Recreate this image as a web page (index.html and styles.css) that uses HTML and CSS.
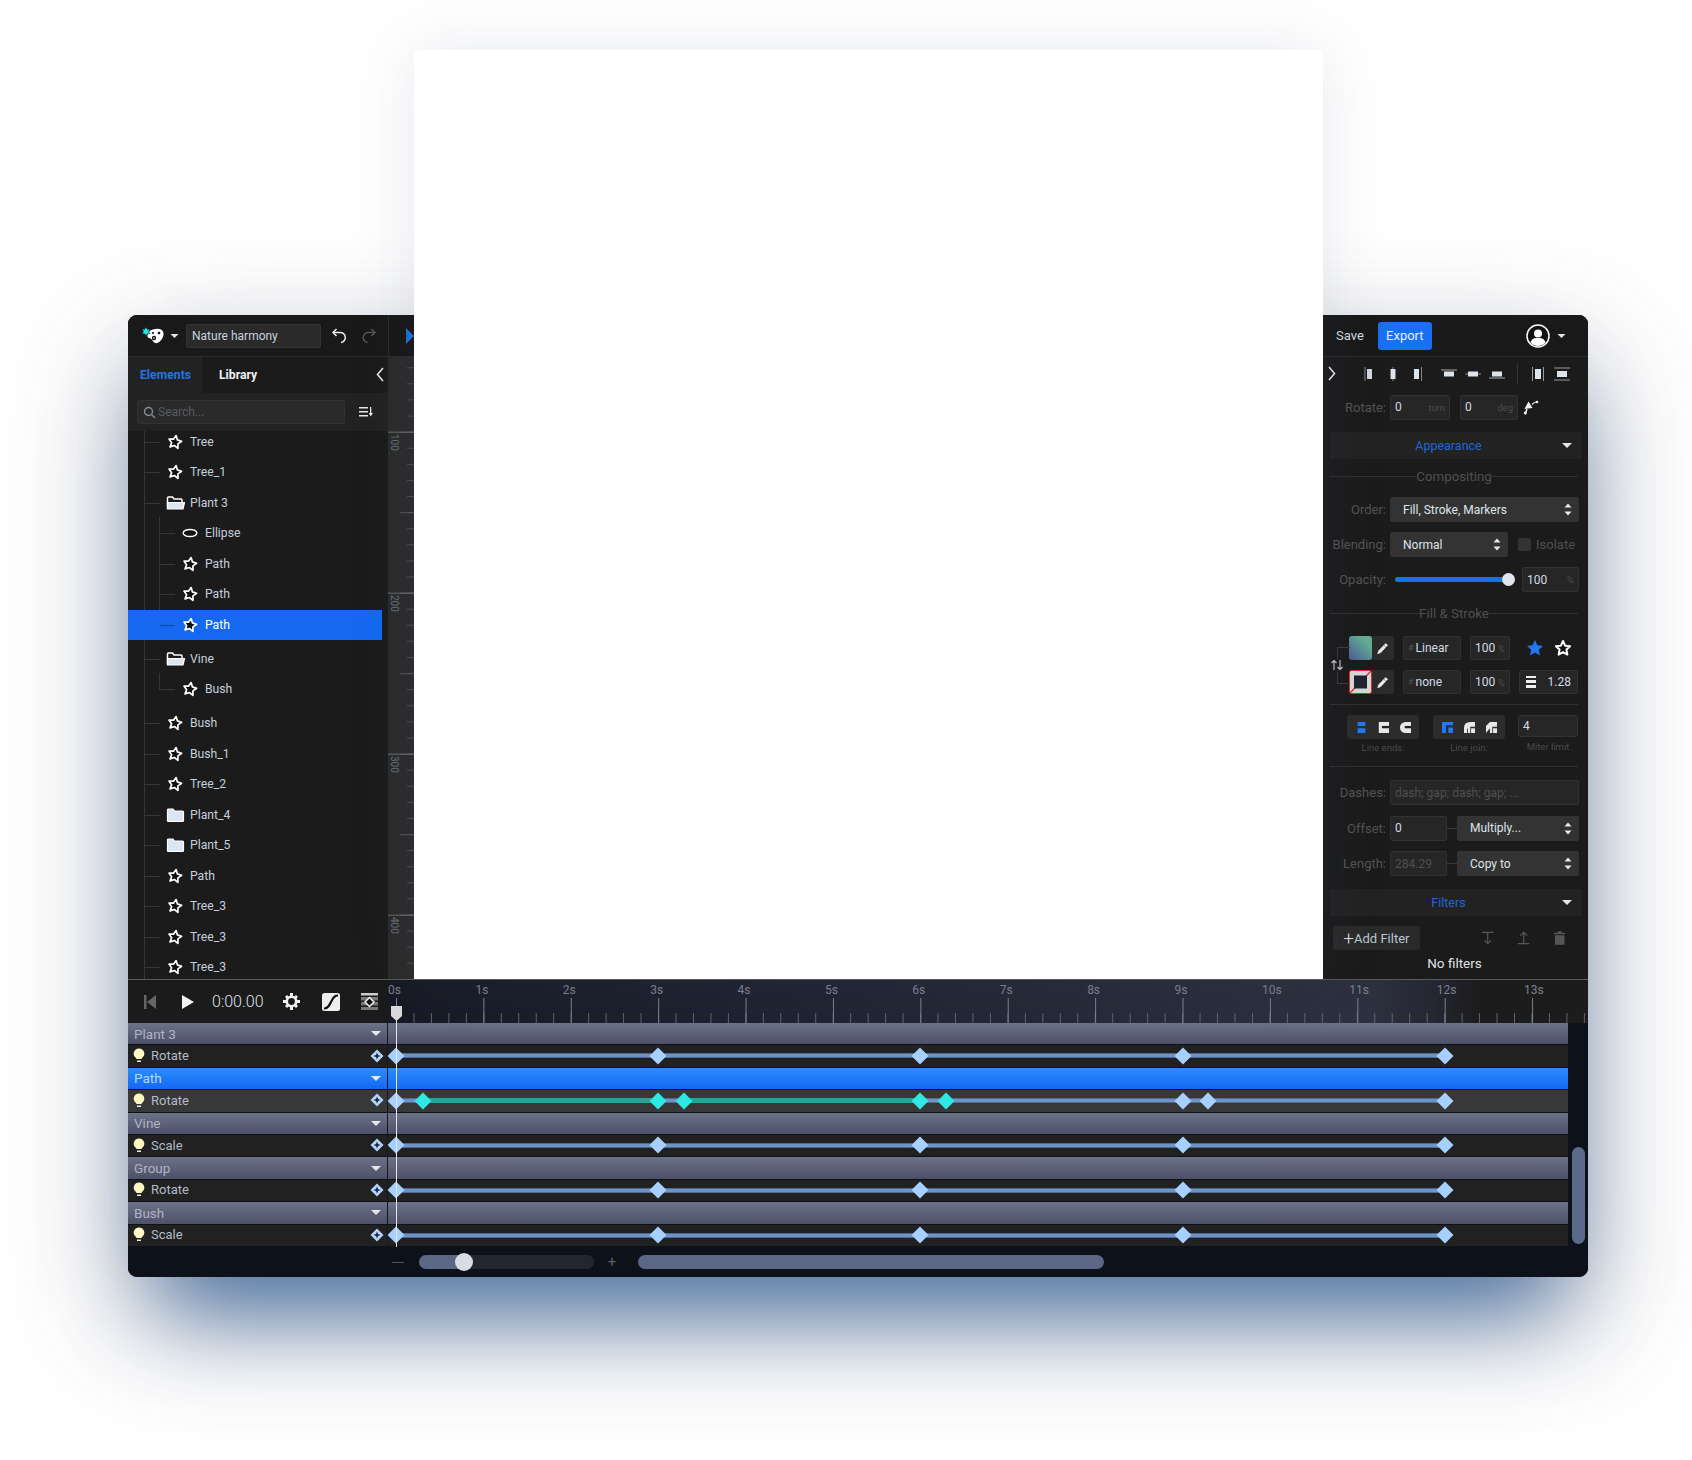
FILE: index.html
```html
<!DOCTYPE html>
<html lang="en">
<head>
    <meta charset="UTF-8">
    <meta name="viewport" content="width=device-width, initial-scale=1.0">
    <title>Nature harmony - Editor</title>
    <link rel="stylesheet" href="styles.css">
</head>
<body>
    <svg class="defs" width="0" height="0">
        <symbol id="star" viewBox="0 0 16 16"><path transform="rotate(10 8 8)" d="M8 1.500l2 4 4.400.7-3.200 3.100.8 4.400L8 11.600l-4 2.100.8-4.400L1.600 6.200 6 5.500z" fill="#111" stroke="#fff" stroke-width="1.700" stroke-linejoin="round"/></symbol>
        <symbol id="folder-open" viewBox="0 0 20 16"><path d="M1.500 13.500V3q0-1 1-1h4l1.500 2h7q1 0 1 1v2" fill="none" stroke="#fff" stroke-width="1.500"/><path d="M1.500 14l0-6.500h17l-1.500 6.500z" fill="#dce6f2" stroke="#fff" stroke-width="1.200" stroke-linejoin="round"/></symbol>
        <symbol id="folder" viewBox="0 0 20 16"><path d="M1.500 13.500V3q0-1 1-1h4.500l1.500 2h8q1 0 1 1v8.500q0 1-1 1H2.500q-1 0-1-1z" fill="#dce6f2" stroke="#fff" stroke-width="1.200"/></symbol>
        <symbol id="updown" viewBox="0 0 8 13"><path d="M4 .5l3.500 4h-7zM4 12.500l3.500-4h-7z" fill="#e8e8e8"/></symbol>
        <symbol id="caret" viewBox="0 0 10 5"><path d="M0 0h10L5 5z" fill="#e6e6e6"/></symbol>
        <symbol id="pencil" viewBox="0 0 14 14"><path d="M10.500 1.500l2 2-7.500 8-3.200 1.200 1-3.300z" fill="#eee" stroke="#eee" stroke-width=".6" stroke-linejoin="round"/><path d="M9 4l1.500 1.500" stroke="#333" stroke-width=".8"/></symbol>
        <symbol id="bulb" viewBox="0 0 12 15"><path d="M6 .5a5.300 5.300 0 0 1 2.800 9.800L8.500 11h-5l-.3-.7A5.300 5.300 0 0 1 6 .5z" fill="#fff8c4"/><path d="M4 12.500h4V14H4z" fill="#eee"/></symbol>
        <symbol id="key-btn" viewBox="0 0 14 14"><path d="M7 .5L13.500 7 7 13.500.5 7z" fill="#b2d5ff"/><path d="M7 3.500L8 6l2.500 1L8 8l-1 2.500L6 8 3.500 7 6 6z" fill="#1f2430"/></symbol>
    </svg>

    <div class="canvas"></div>

    <div class="window">
        <div class="workspace">
            <!-- elements panel -->
            <aside class="left-panel">
                <div class="top-bar">
                    <svg class="logo" width="24" height="18" viewBox="0 0 24 18">
                        <path d="M9 3.500q5-2.500 10-1.500 4 1.500 3.500 6-1 5-5 7.500-3 1.500-5-.5-1-3-4-4-2.500-.5-2-3z" fill="#fff"/>
                        <circle cx="13" cy="11" r="2.200" fill="#111"/><circle cx="13" cy="11" r=".8" fill="#fff"/><circle cx="18" cy="6" r="1.300" fill="#111"/><circle cx="12" cy="6" r="1.100" fill="#111"/>
                        <path d="M5 0l1.300 2.200L9 2.200 7.600 4.500 9 6.800H6.300L5 9 3.700 6.800H1L2.400 4.500 1 2.200h2.700z" fill="#21e6e6" stroke="#111" stroke-width=".5"/>
                    </svg>
                    <svg class="caret" width="9" height="4"><use href="#caret"/></svg>
                    <div class="project-name">Nature harmony</div>
                    <svg class="history" width="18" height="18" viewBox="0 0 18 18" fill="none" stroke="#eee" stroke-width="1.500"><path d="M3 5.500h6.500a5 5 0 0 1 1.500 10"/><path d="M6.500 2L3 5.500 6.500 9" stroke-width="1.500"/></svg>
                    <svg class="history dim" width="18" height="18" viewBox="0 0 18 18" fill="none" stroke="#555" stroke-width="1.500"><path d="M15 5.500H9a5 5 0 0 0-1.500 10"/><path d="M11.500 2L15 5.500 11.500 9"/></svg>
                </div>
                <div class="tabs">
                    <div class="tab active">Elements</div>
                    <div class="tab library">Library</div>
                    <svg class="collapse" width="8" height="15" viewBox="0 0 8 15" fill="none" stroke="#e8e8e8" stroke-width="1.600"><path d="M7 1L1.500 7.500 7 14"/></svg>
                </div>
                <div class="search-row">
                    <div class="search">
                        <svg width="13" height="13" viewBox="0 0 13 13" fill="none" stroke="#8a8f98" stroke-width="1.300"><circle cx="5.500" cy="5.500" r="4"/><path d="M8.500 8.500l3.500 3.500"/></svg>
                        <span>Search...</span>
                    </div>
                    <svg width="14" height="10" viewBox="0 0 14 10" fill="#e8e8e8"><path d="M0 0h9v1.500H0zM0 4h9v1.500H0zM0 8h9v1.500H0zM11 0h1.300v6H14l-2.300 3.500L9.700 6H11z"/></svg>
                </div>
                <div class="tree">
                    <div class="tree-scroll">
                        <div class="node"><svg class="icon"><use href="#star"/></svg>Tree</div>
                        <div class="node"><svg class="icon"><use href="#star"/></svg>Tree_1</div>
                        <div class="node"><svg class="icon wide"><use href="#folder-open"/></svg>Plant 3</div>
                        <div class="branch">
                            <div class="node sub"><svg class="ellipse" width="16" height="10" viewBox="0 0 16 10"><ellipse cx="8" cy="5" rx="6.800" ry="3.600" fill="#111" stroke="#fff" stroke-width="1.500"/></svg>Ellipse</div>
                            <div class="node sub"><svg class="icon"><use href="#star"/></svg>Path</div>
                            <div class="node sub"><svg class="icon"><use href="#star"/></svg>Path</div>
                            <div class="node sub selected"><svg class="icon"><use href="#star"/></svg>Path</div>
                        </div>
                        <div class="node group-start"><svg class="icon wide"><use href="#folder-open"/></svg>Vine</div>
                        <div class="branch short">
                            <div class="node sub"><svg class="icon"><use href="#star"/></svg>Bush</div>
                        </div>
                        <div class="node group-start"><svg class="icon"><use href="#star"/></svg>Bush</div>
                        <div class="node"><svg class="icon"><use href="#star"/></svg>Bush_1</div>
                        <div class="node"><svg class="icon"><use href="#star"/></svg>Tree_2</div>
                        <div class="node"><svg class="icon wide"><use href="#folder"/></svg>Plant_4</div>
                        <div class="node"><svg class="icon wide"><use href="#folder"/></svg>Plant_5</div>
                        <div class="node"><svg class="icon"><use href="#star"/></svg>Path</div>
                        <div class="node"><svg class="icon"><use href="#star"/></svg>Tree_3</div>
                        <div class="node"><svg class="icon"><use href="#star"/></svg>Tree_3</div>
                        <div class="node"><svg class="icon"><use href="#star"/></svg>Tree_3</div>
                    </div>
                </div>
            </aside>

            <div class="v-ruler-col">
                <div class="v-ruler-head"><svg width="8" height="16" viewBox="0 0 8 16"><path d="M0 0l8 8-8 8z" fill="#1f6fd8"/></svg></div>
                <div class="v-ruler">
                    <span class="r100">100</span>
                    <span class="r200">200</span>
                    <span class="r300">300</span>
                    <span class="r400">400</span>
                </div>
            </div>

            <div class="center"></div>

            <!-- properties panel -->
            <aside class="right-panel">
                <div class="top-bar right-bar">
                    <span class="save">Save</span>
                    <span class="export">Export</span>
                    <svg class="avatar" width="24" height="24" viewBox="0 0 24 24"><circle cx="12" cy="12" r="11" fill="#111" stroke="#fff" stroke-width="1.500"/><circle cx="12" cy="9.500" r="4" fill="#fff"/><path d="M4.500 18.500q1-4 5-4.500h5q4 .5 5 4.500a10 10 0 0 1-15 0z" fill="#fff"/></svg>
                    <svg class="caret" width="9" height="4"><use href="#caret"/></svg>
                </div>

                <div class="align-row">
                    <svg class="expand" width="8" height="15" viewBox="0 0 8 15" fill="none" stroke="#e0e0e0" stroke-width="1.600"><path d="M1 1l5.500 6.500L1 14"/></svg>
                    <svg class="align" width="16" height="16" viewBox="0 0 16 16"><path d="M3.500 1h1v14h-1z" fill="#888"/><path d="M6 3h5v10H6z" fill="#cfd6e0"/></svg>
                    <svg class="align" width="16" height="16" viewBox="0 0 16 16"><path d="M7.500 1h1v14h-1z" fill="#888"/><path d="M5.500 3h5v10h-5z" fill="#dde3ea"/></svg>
                    <svg class="align" width="16" height="16" viewBox="0 0 16 16"><path d="M12 1h1v14h-1z" fill="#888"/><path d="M5 3h5v10H5z" fill="#dde3ea"/></svg>
                    <svg class="align gap-l" width="16" height="16" viewBox="0 0 16 16"><path d="M0 3.500h16v1H0z" fill="#aaa"/><path d="M3 5.500h10v5H3z" fill="#dde3ea"/></svg>
                    <svg class="align" width="16" height="16" viewBox="0 0 16 16"><path d="M0 7.500h16v1H0z" fill="#888"/><path d="M3 5.500h10v5H3z" fill="#dde3ea"/></svg>
                    <svg class="align" width="16" height="16" viewBox="0 0 16 16"><path d="M0 11.500h16v1H0z" fill="#aaa"/><path d="M3 5.500h10v5H3z" fill="#dde3ea"/></svg>
                    <span class="align-sep"></span>
                    <svg class="align" width="16" height="16" viewBox="0 0 16 16"><path d="M2 1h1v14H2zM13 1h1v14h-1z" fill="#999"/><path d="M5 3h6v10H5z" fill="#dde3ea"/></svg>
                    <svg class="align" width="16" height="16" viewBox="0 0 16 16"><path d="M0 1.500h16v1H0zM0 13.500h16v1H0z" fill="#999"/><path d="M3 5h10v6H3z" fill="#dde3ea"/></svg>
                </div>

                <div class="form-row rotate-row">
                    <label>Rotate:</label>
                    <div class="field w60"><span>0</span><em>turn</em></div>
                    <div class="field w58"><span>0</span><em>deg</em></div>
                    <svg class="origin" width="16" height="15" viewBox="0 0 16 15" fill="none"><path d="M5.500 1.500L9.500 8 1.500 9z" fill="#f2f2f2"/><path d="M4 9l-1.500 4" stroke="#f2f2f2" stroke-width="1.500"/><path d="M9 4.500q2-2 4-2.500" stroke="#eee" stroke-width="1.200"/><circle cx="2.300" cy="13" r="1.500" fill="#f2f2f2"/><circle cx="14" cy="2" r="1.300" fill="#f2f2f2"/></svg>
                </div>

                <div class="section-bar">Appearance<svg class="caret" width="10" height="5"><use href="#caret"/></svg></div>
                <div class="legend comp">Compositing</div>

                <div class="form-row order-row">
                    <label>Order:</label>
                    <div class="select grow">Fill, Stroke, Markers<svg width="8" height="13"><use href="#updown"/></svg></div>
                </div>
                <div class="form-row blend-row">
                    <label>Blending:</label>
                    <div class="select w118">Normal<svg width="8" height="13"><use href="#updown"/></svg></div>
                    <span class="check"></span>
                    <span class="isolate">Isolate</span>
                </div>
                <div class="form-row opacity-row">
                    <label>Opacity:</label>
                    <div class="slider"><span></span></div>
                    <div class="field w57"><span>100</span><em>%</em></div>
                </div>

                <div class="legend fs">Fill &amp; Stroke</div>

                <div class="paint">
                    <svg class="swap" width="14" height="12" viewBox="0 0 14 12" fill="none" stroke="#ccc" stroke-width="1.100"><path d="M4 11V1.500M1.500 4L4 1.500 6.500 4M10 1v9.500M7.500 8l2.500 2.500L12.500 8"/></svg>
                    <div class="paint-row">
                        <div class="swatch-box"><span class="swatch fill"></span><svg width="13" height="13"><use href="#pencil"/></svg></div>
                        <div class="field w58 tag"><i>#</i><span>Linear</span></div>
                        <div class="field w40 tag"><span>100</span><em>%</em></div>
                        <svg class="star-btn first" width="18" height="18" viewBox="0 0 18 18"><path d="M9 1l2.400 5.300 5.600.6-4.200 3.800 1.200 5.800L9 13.600l-5 2.900 1.200-5.800L1 6.900l5.600-.6z" fill="#2178f2"/></svg>
                        <svg class="star-btn" width="18" height="18" viewBox="0 0 18 18"><path d="M9 2l2.100 4.700 5 .5-3.700 3.400 1 5L9 13.100l-4.400 2.500 1-5L1.900 7.200l5-.5z" fill="#111" stroke="#fff" stroke-width="2" stroke-linejoin="round"/></svg>
                    </div>
                    <div class="paint-row">
                        <div class="swatch-box">
                            <svg class="swatch" width="23" height="24" viewBox="0 0 23 24">
                                <rect x=".5" y=".5" width="22" height="23" rx="2" fill="#d9d9d9" stroke="#e02c2c"/>
                                <path d="M1 23L22 1" stroke="#e02c2c" stroke-width="1.300"/>
                                <rect x="5" y="5.500" width="13" height="13" fill="#20242e"/>
                            </svg>
                            <svg width="13" height="13"><use href="#pencil"/></svg>
                        </div>
                        <div class="field w58 tag"><i>#</i><span>none</span></div>
                        <div class="field w40 tag"><span>100</span><em>%</em></div>
                        <div class="field w59 width-box">
                            <svg width="12" height="12" viewBox="0 0 12 12" fill="#eee"><path d="M1 0h10v2H1zM1 4h10v3H1zM1 9h10v3H1z"/></svg>
                            <span>1.28</span>
                        </div>
                    </div>
                </div>

                <div class="rule r1"></div>

                <div class="line-opts">
                    <div class="opt">
                        <div class="btns">
                            <svg width="13" height="11" viewBox="0 0 16 14" fill="#2178f2"><path d="M3 0h10v5H3zM3 8h10v6H3z"/></svg>
                            <svg width="13" height="11" viewBox="0 0 16 14"><path d="M2 0h13v14H2z" fill="#e8e8e8"/><path d="M6 5h9v3H6z" fill="#222"/></svg>
                            <svg width="13" height="11" viewBox="0 0 16 14"><path d="M15 0H8a7 7 0 0 0 0 14h7z" fill="#e8e8e8"/><path d="M7 5h8v3H7z" fill="#222"/></svg>
                        </div>
                        <small>Line ends:</small>
                    </div>
                    <div class="opt">
                        <div class="btns">
                            <svg width="13" height="11" viewBox="0 0 16 14"><path d="M1 0h14v4H6v10H1z" fill="#2178f2"/><path d="M9 7h6v7H9z" fill="#2178f2"/></svg>
                            <svg width="13" height="11" viewBox="0 0 16 14"><path d="M1 14V8q0-8 8-8h6v6H9v8H6V8q-1 0-1 2v4z" fill="#e8e8e8"/><path d="M10 8h5v6h-5z" fill="#e8e8e8"/></svg>
                            <svg width="13" height="11" viewBox="0 0 16 14"><path d="M1 14V5l5-5h9v6H9v8H6V8z" fill="#e8e8e8"/><path d="M10 8h5v6h-5z" fill="#e8e8e8"/></svg>
                        </div>
                        <small>Line join:</small>
                    </div>
                    <div class="opt miter">
                        <div class="field w60"><span>4</span></div>
                        <small>Miter limit</small>
                    </div>
                </div>

                <div class="rule r2"></div>

                <div class="form-row dash-row">
                    <label>Dashes:</label>
                    <div class="field grow placeholder"><span>dash; gap; dash; gap; ...</span></div>
                </div>
                <div class="form-row dash-row2">
                    <label>Offset:</label>
                    <div class="field w57"><span>0</span></div>
                    <span class="link"></span>
                    <div class="select grow">Multiply...<svg width="8" height="13"><use href="#updown"/></svg></div>
                </div>
                <div class="form-row dash-row2">
                    <label>Length:</label>
                    <div class="field w57 placeholder"><span>284.29</span></div>
                    <span class="link"></span>
                    <div class="select grow">Copy to<svg width="8" height="13"><use href="#updown"/></svg></div>
                </div>

                <div class="section-bar filters">Filters<svg class="caret" width="10" height="5"><use href="#caret"/></svg></div>

                <div class="filter-actions">
                    <div class="add-filter"><b>+</b>Add Filter</div>
                    <svg width="14" height="14" viewBox="0 0 14 14" fill="none" stroke="#555" stroke-width="1.300"><path d="M1 1h12M7 1v12M3.500 9.500L7 13l3.500-3.500"/></svg>
                    <svg width="14" height="14" viewBox="0 0 14 14" fill="none" stroke="#555" stroke-width="1.300"><path d="M1 13h12M7 13V1M3.500 4.500L7 1l3.500 3.500"/></svg>
                    <svg width="12" height="14" viewBox="0 0 12 14" fill="#555"><path d="M4 0h4v1.500h4V3H0V1.500h4zM1 4h10v10H1z"/></svg>
                </div>
                <div class="no-filters">No filters</div>
            </aside>
        </div>

        <!-- timeline -->
        <section class="timeline">
            <div class="time-head">
                <div class="transport">
                    <svg class="skip" width="14" height="16" viewBox="0 0 14 16" fill="#666"><path d="M1 1h2.500v14H1zM13 1v14L4 8z"/></svg>
                    <svg class="play" width="14" height="16" viewBox="0 0 14 16" fill="#f2f2f2"><path d="M1 1l12 7-12 7z"/></svg>
                    <span class="clock">0:00.00</span>
                    <svg class="gear" width="17" height="17" viewBox="0 0 17 17"><circle cx="8.500" cy="8.500" r="4.700" fill="none" stroke="#f2f2f2" stroke-width="2.600"/><path d="M7 0h3v3H7zM7 14h3v3H7zM0 7h3v3H0zM14 7h3v3h-3zM2 4l2-2 2 2-2 2zM11 4l2-2 2 2-2 2zM2 13l2-2 2 2-2 2zM11 13l2-2 2 2-2 2z" fill="#f2f2f2"/></svg>
                    <svg class="curve" width="18" height="18" viewBox="0 0 18 18"><rect width="18" height="18" rx="2.500" fill="#eee"/><path d="M2 15.500C9.500 16 8.500 2 16 2.500" fill="none" stroke="#111" stroke-width="2.200"/></svg>
                    <svg class="keys" width="17" height="17" viewBox="0 0 17 17"><path d="M0 0h17v2.500H0z" fill="#ccc"/><path d="M0 4h17v3.500H0zM0 9h17v3.500H0zM0 14h17v3H0z" fill="#777"/><path d="M8.500 4.500l4.500 4.500-4.500 4.500L4 9z" fill="#111" stroke="#eee" stroke-width="1.500"/></svg>
                </div>
                <div class="time-ruler">
                    <div class="sec-labels">
                        <span>0s</span><span>1s</span><span>2s</span><span>3s</span><span>4s</span><span>5s</span><span>6s</span><span>7s</span><span>8s</span><span>9s</span><span>10s</span><span>11s</span><span>12s</span><span>13s</span>
                    </div>
                </div>
            </div>

            <div class="time-body">
                <div class="tracks">
                    <div class="track group"><div class="track-label">Plant 3<svg width="10" height="5"><use href="#caret"/></svg></div><div class="lane"></div></div>
                    <div class="track prop">
                        <div class="track-label"><svg class="bulb" width="12" height="15"><use href="#bulb"/></svg>Rotate<svg class="key-btn" width="14" height="14"><use href="#key-btn"/></svg></div>
                        <div class="lane"><span class="bar"></span><i class="kf k0"></i><i class="kf k3"></i><i class="kf k6"></i><i class="kf k9"></i><i class="kf k12"></i></div>
                    </div>
                    <div class="track group current"><div class="track-label">Path<svg width="10" height="5"><use href="#caret"/></svg></div><div class="lane"></div></div>
                    <div class="track prop lit">
                        <div class="track-label"><svg class="bulb" width="12" height="15"><use href="#bulb"/></svg>Rotate<svg class="key-btn" width="14" height="14"><use href="#key-btn"/></svg></div>
                        <div class="lane">
                            <span class="bar"></span><span class="bar-on s1"></span><span class="bar-on s2"></span>
                            <i class="kf k0"></i><i class="kf on k-a"></i><i class="kf on k3"></i><i class="kf on k-b"></i><i class="kf on k6"></i><i class="kf on k-c"></i><i class="kf k9"></i><i class="kf k-d"></i><i class="kf k12"></i>
                        </div>
                    </div>
                    <div class="track group"><div class="track-label">Vine<svg width="10" height="5"><use href="#caret"/></svg></div><div class="lane"></div></div>
                    <div class="track prop">
                        <div class="track-label"><svg class="bulb" width="12" height="15"><use href="#bulb"/></svg>Scale<svg class="key-btn" width="14" height="14"><use href="#key-btn"/></svg></div>
                        <div class="lane"><span class="bar"></span><i class="kf k0"></i><i class="kf k3"></i><i class="kf k6"></i><i class="kf k9"></i><i class="kf k12"></i></div>
                    </div>
                    <div class="track group"><div class="track-label">Group<svg width="10" height="5"><use href="#caret"/></svg></div><div class="lane"></div></div>
                    <div class="track prop">
                        <div class="track-label"><svg class="bulb" width="12" height="15"><use href="#bulb"/></svg>Rotate<svg class="key-btn" width="14" height="14"><use href="#key-btn"/></svg></div>
                        <div class="lane"><span class="bar"></span><i class="kf k0"></i><i class="kf k3"></i><i class="kf k6"></i><i class="kf k9"></i><i class="kf k12"></i></div>
                    </div>
                    <div class="track group"><div class="track-label">Bush<svg width="10" height="5"><use href="#caret"/></svg></div><div class="lane"></div></div>
                    <div class="track prop">
                        <div class="track-label"><svg class="bulb" width="12" height="15"><use href="#bulb"/></svg>Scale<svg class="key-btn" width="14" height="14"><use href="#key-btn"/></svg></div>
                        <div class="lane"><span class="bar"></span><i class="kf k0"></i><i class="kf k3"></i><i class="kf k6"></i><i class="kf k9"></i><i class="kf k12"></i></div>
                    </div>
                </div>
                <div class="v-scroll"><span></span></div>
            </div>

            <div class="time-foot">
                <span class="zoom-btn minus"></span>
                <div class="zoom-track"><span class="zoom-fill"></span><span class="zoom-thumb"></span></div>
                <span class="zoom-btn plus">+</span>
                <div class="h-scroll"></div>
            </div>

            <div class="playhead"><svg width="11" height="15" viewBox="0 0 11 15"><path d="M0 0h11v10l-5.500 5L0 10z" fill="#d9d9d9"/></svg></div>
        </section>
    </div>
</body>
</html>
```

FILE: styles.css
```css
* {
    margin: 0;
    padding: 0;
    box-sizing: border-box;
}

body {
    font-family: Roboto, "Liberation Sans", sans-serif;
    font-size: 12px;
    color: #c8d0dc;
    background: #fff;
    height: 1460px;
    overflow: hidden;
    padding: 315px 104px 0 128px;
    position: relative;
}

.defs {
    position: absolute;
}

.canvas {
    position: absolute;
    left: 414px;
    top: 50px;
    width: 909px;
    height: 929px;
    background: #fff;
    box-shadow: 0 0 60px rgba(70, 85, 115, 0.13);
    z-index: 2;
}

.window {
    width: 1460px;
    height: 962px;
    background: #1a1a1a;
    border-radius: 9px;
    box-shadow: 0 62px 85px -36px rgba(30, 85, 150, 0.72), 0 42px 115px rgba(60, 70, 95, 0.44);
    display: flex;
    flex-direction: column;
    position: relative;
    overflow: hidden;
}

.workspace {
    height: 664px;
    display: flex;
}

/* left panel */
.left-panel {
    width: 260px;
    display: flex;
    flex-direction: column;
    background: #1b1b1b;
}

.top-bar {
    height: 42px;
    display: flex;
    align-items: center;
    border-bottom: 1px solid #2a2a2a;
    background: #191919;
    padding-left: 13px;
}

.caret {
    margin-left: 5px;
    flex: none;
}

.project-name {
    width: 135px;
    height: 24px;
    margin-left: 7px;
    padding-left: 5px;
    line-height: 23px;
    background: #2a2a2a;
    border: 1px solid #333;
    border-radius: 2px;
    color: #c9d2de;
}

.history {
    margin-left: 9px;
    margin-top: 1px;
}

.history.dim {
    margin-left: 12px;
}

.tabs {
    height: 36px;
    display: flex;
    align-items: center;
    font-weight: 700;
    font-size: 12.2px;
    background: #1d1d1d;
    position: relative;
}

.tab {
    height: 100%;
    line-height: 36px;
}

.tab.active {
    width: 74px;
    padding-left: 12px;
    color: #1f74e8;
    background: #222;
}

.tab.library {
    width: 186px;
    padding-left: 17px;
    color: #eef1f5;
    background: #1b1b1b;
}

.collapse {
    position: absolute;
    right: 4px;
    top: 10px;
}

.search-row {
    height: 38px;
    display: flex;
    align-items: center;
    padding-left: 9px;
    background: #222;
}

.search {
    width: 208px;
    height: 24px;
    display: flex;
    align-items: center;
    gap: 2px;
    padding-left: 5px;
    margin-right: 14px;
    background: #2a2a2a;
    border: 1px solid #333;
    border-radius: 2px;
    color: #575b62;
}

.tree {
    flex: 1;
    overflow: hidden;
    position: relative;
}

.tree-scroll {
    margin-top: -4.5px;
    position: relative;
}

.tree-scroll::before {
    content: "";
    position: absolute;
    left: 16px;
    top: 0;
    bottom: 0;
    width: 1px;
    background: #33363c;
}

.node {
    height: 30.5px;
    display: flex;
    align-items: center;
    padding-left: 39px;
    color: #c4cedc;
    font-size: 12.2px;
    position: relative;
}

.node::before {
    content: "";
    position: absolute;
    left: 17px;
    top: 15px;
    width: 15px;
    height: 1px;
    background: #33363c;
}

.node.sub {
    padding-left: 54px;
}

.node.sub::before {
    left: 32px;
    width: 15px;
}

.node.group-start {
    margin-top: 3.5px;
}

.branch {
    position: relative;
}

.branch::before {
    content: "";
    position: absolute;
    left: 31px;
    top: -1px;
    bottom: 15px;
    width: 1px;
    background: #33363c;
}

.node.selected {
    width: 254px;
    color: #fff;
    background: #1469f0;
    z-index: 1;
}

.node.selected::before {
    background: #0d47a8;
}

.icon {
    width: 16px;
    height: 16px;
    margin-right: 7px;
    flex: none;
}

.icon.wide {
    width: 20px;
    margin-left: -1px;
    margin-right: 4px;
}

.ellipse {
    margin-right: 7px;
}

/* vertical ruler */
.v-ruler-col {
    width: 26px;
    display: flex;
    flex-direction: column;
}

.v-ruler-head {
    height: 42px;
    background: #171717;
    border-left: 1px solid #2a2a2a;
    border-bottom: 1px solid #2a2a2a;
    display: flex;
    align-items: center;
    justify-content: flex-end;
}

.v-ruler {
    flex: 1;
    position: relative;
    background:
        linear-gradient(#6a6a6a 1px, transparent 1px) 0 74.7px / 26px 161px repeat-y,
        linear-gradient(#555 1px, transparent 1px) right 74.7px / 14px 80.5px repeat-y,
        linear-gradient(#4e4e4e 1px, transparent 1px) right 10.3px / 7px 16.1px repeat-y,
        #2b2b2b;
}

.v-ruler span {
    position: absolute;
    left: 1px;
    writing-mode: vertical-rl;
    font-size: 10px;
    color: #6a6e78;
}

.r100 { top: 77px; }
.r200 { top: 238px; }
.r300 { top: 399px; }
.r400 { top: 560px; }

.center {
    flex: 1;
}

/* right panel */
.right-panel {
    width: 265px;
    background: #1b1b1b;
}

.right-bar {
    padding-left: 13px;
}

.save {
    color: #d5d9df;
    font-size: 13px;
}

.export {
    width: 54px;
    height: 28px;
    margin-left: 14px;
    line-height: 28px;
    text-align: center;
    font-size: 13px;
    color: #e6f0ff;
    background: #1a70f2;
    border-radius: 3px;
}

.avatar {
    margin-left: 94px;
}

.right-bar .caret {
    margin-left: 7px;
}

.align-row {
    height: 33px;
    display: flex;
    align-items: center;
    padding-left: 5px;
    gap: 8px;
}

.expand {
    margin-right: 17px;
}

.align {
    flex: none;
}

.gap-l {
    margin-left: 8px;
}

.align-sep {
    width: 1px;
    height: 22px;
    margin: 0 4px;
    background: #333;
}

.form-row {
    display: flex;
    align-items: center;
    padding-right: 9px;
}

.form-row label {
    width: 67px;
    padding-right: 4px;
    text-align: right;
    color: #545454;
    font-size: 13px;
    flex: none;
}

.field,
.select {
    height: 25px;
    display: flex;
    align-items: center;
    background: #262626;
    border: 1px solid #313131;
    border-radius: 2px;
    color: #d5dbe4;
    font-size: 12px;
    padding: 0 4px;
    flex: none;
}

.field em {
    margin-left: auto;
    font-style: normal;
    font-size: 9.5px;
    color: #4c4c4c;
}

.field i {
    font-style: normal;
    color: #4f4f4f;
    font-size: 9px;
    margin-right: 2px;
}

.select {
    background: #333;
    border-color: #333;
    padding: 0 6px 0 12px;
    justify-content: space-between;
    color: #dfe4ea;
}

.grow {
    flex: 1;
}

.w40 { width: 40px; }
.w57 { width: 57px; }
.w58 { width: 58px; }
.w59 { width: 59px; }
.w60 { width: 60px; }
.w118 { width: 118px; }

.rotate-row {
    height: 26px;
    margin-top: 4px;
}

.rotate-row .w58 {
    margin-left: 10px;
}

.origin {
    margin-left: 5px;
}

.section-bar {
    height: 27px;
    margin: 12px 6px 0 7px;
    padding-right: 15px;
    display: flex;
    align-items: center;
    justify-content: center;
    background: #222;
    color: #1d68d4;
    font-size: 12.5px;
    position: relative;
}

.section-bar .caret {
    position: absolute;
    right: 10px;
    top: 11px;
}

.legend {
    display: flex;
    align-items: center;
    margin: 0 10px 0 7px;
    color: #4f4f4f;
    font-size: 13.3px;
    height: 18px;
}

.legend::before,
.legend::after {
    content: "";
    flex: 1;
    height: 1px;
    background: #303030;
}

.legend.comp {
    margin-top: 8px;
}

.order-row {
    margin-top: 12px;
}

.blend-row {
    margin-top: 10px;
}

.check {
    width: 13px;
    height: 13px;
    margin-left: 10px;
    background: #333;
    border-radius: 2px;
}

.isolate {
    margin-left: 5px;
    color: #4f4f4f;
    font-size: 13px;
}

.opacity-row {
    margin-top: 10px;
}

.slider {
    width: 114px;
    height: 5px;
    margin: 0 13px 0 5px;
    background: #1a70f2;
    border-radius: 3px;
    position: relative;
    flex: none;
}

.slider span {
    position: absolute;
    right: -6px;
    top: -4.5px;
    width: 13px;
    height: 13px;
    border-radius: 50%;
    background: #dfe5ee;
}

.legend.fs {
    margin-top: 12px;
}

.paint {
    position: relative;
    margin-top: 14px;
    padding-left: 26px;
}

.paint::before {
    content: "";
    position: absolute;
    left: 14px;
    top: 11px;
    width: 12px;
    height: 35px;
    border: 1px solid #3a3a3a;
    border-right: none;
}

.swap {
    position: absolute;
    left: 7px;
    top: 23px;
    background: #1b1b1b;
}

.paint-row {
    height: 24px;
    display: flex;
    align-items: center;
    margin-bottom: 10px;
}

.swatch-box {
    width: 45px;
    height: 24px;
    display: flex;
    align-items: center;
    gap: 4px;
    background: #2c2c2c;
    border-radius: 3px;
    flex: none;
}

.swatch {
    width: 23px;
    height: 24px;
    border-radius: 3px;
    display: block;
    flex: none;
}

.swatch.fill {
    background: linear-gradient(45deg, #4a5a98, #65ad93 75%);
}

.paint-row .w58 {
    margin-left: 9px;
    height: 24px;
}

.paint-row .w40 {
    margin-left: 9px;
    height: 24px;
}

.star-btn.first {
    margin-left: 16px;
}

.star-btn {
    margin-left: 10px;
}

.width-box {
    margin-left: 9px;
    height: 24px;
    justify-content: space-between;
    padding: 0 6px 0 5px;
}

.rule {
    height: 1px;
    background: #303030;
    margin: 0 10px 0 7px;
}

.r1 {
    margin-top: 1px;
}

.line-opts {
    display: flex;
    padding: 10px 9px 0 24px;
    height: 61px;
}

.opt {
    display: flex;
    flex-direction: column;
    align-items: center;
    margin-right: 14px;
}

.opt small {
    font-size: 9.5px;
    color: #4a4a4a;
    margin-top: 3px;
}

.btns {
    width: 72px;
    height: 24px;
    display: flex;
    align-items: center;
    justify-content: space-around;
    padding: 0 3px;
    background: #2c2c2c;
    border-radius: 3px;
}

.miter {
    margin-right: 0;
    margin-left: -1px;
}

.miter .field {
    height: 22px;
}

.miter small {
    margin-top: 4px;
}

.dash-row {
    margin-top: 13px;
}

.placeholder {
    color: #4f4f4f;
}

.dash-row2 {
    margin-top: 10.5px;
}

.link {
    width: 10px;
    height: 1px;
    background: #3a3a3a;
}

.filters {
    margin-top: 13px;
}

.filter-actions {
    display: flex;
    align-items: center;
    height: 24px;
    margin-top: 10px;
    padding-left: 10px;
}

.add-filter {
    width: 91px;
    height: 24px;
    display: flex;
    align-items: center;
    justify-content: center;
    background: #2a2a2a;
    border-radius: 3px;
    color: #bcc4cf;
    font-size: 13px;
    margin-right: 61px;
}

.add-filter b {
    font-weight: 300;
    font-size: 19px;
    line-height: 1;
    color: #ddd;
}

.filter-actions svg {
    margin-right: 23px;
}

.no-filters {
    margin-top: 5px;
    padding-right: 2px;
    text-align: center;
    color: #dfe3e8;
    font-size: 13.5px;
}

/* timeline */
.timeline {
    flex: 1;
    display: flex;
    flex-direction: column;
    position: relative;
    background: #0d111a;
    border-top: 1px solid #5a5a5a;
}

.time-head {
    height: 43px;
    display: flex;
}

.transport {
    width: 260px;
    display: flex;
    align-items: center;
    padding-left: 15px;
    background: #1b1b1b;
}

.play {
    margin-left: 24px;
}

.clock {
    margin-left: 17px;
    width: 59px;
    font-size: 16px;
    font-weight: 300;
    color: #dde2e8;
}

.gear {
    margin-left: 12px;
}

.curve {
    margin-left: 22px;
}

.keys {
    margin-left: 21px;
}

.time-ruler {
    flex: 1;
    position: relative;
    overflow: hidden;
    background:
        linear-gradient(to right, #7c8090 1px, transparent 1px) 8px bottom / 87.4px 25px repeat-x,
        linear-gradient(to right, #5f6374 1px, transparent 1px) 8px bottom / 17.48px 10px repeat-x,
        linear-gradient(to right, #171a24 0, #1e2230 30%, #2d303e 82%, #252732 87%, #1c1c1c 91%);
}

.sec-labels {
    display: flex;
    padding-top: 3px;
    color: #7b8090;
    font-size: 12px;
}

.sec-labels span {
    width: 87.4px;
    flex: none;
}

.time-body {
    display: flex;
    height: 224px;
}

.tracks {
    width: 1440px;
}

.track {
    height: 22.4px;
    display: flex;
    padding-bottom: 1px;
}

.track-label {
    width: 260px;
    height: 100%;
    display: flex;
    align-items: center;
    padding: 0 5px;
    font-size: 13.5px;
    position: relative;
    border-right: 1px solid #15171d;
    flex: none;
}

.track-label svg {
    flex: none;
}

.group .track-label {
    justify-content: space-between;
    padding: 0 6px;
    color: #aeb4c4;
}

.group .track-label,
.group .lane {
    background: linear-gradient(#6c7287, #4c5168);
}

.group.current .track-label,
.group.current .lane {
    background: linear-gradient(#2a8efc, #1467f2);
}

.group.current .track-label {
    color: #b4d6fd;
}

.prop .track-label,
.prop .lane {
    background: #212121;
}

.lit .track-label,
.lit .lane {
    background: #383838;
}

.prop .track-label {
    color: #b3bbc8;
    font-size: 13px;
    padding-bottom: 1px;
}

.bulb {
    margin-right: 6px;
}

.key-btn {
    margin-left: auto;
    margin-right: -2px;
}

.lane {
    flex: 1;
    position: relative;
}

.bar,
.bar-on {
    position: absolute;
    top: 8px;
    height: 5px;
}

.bar {
    left: 8px;
    width: 1049px;
    background: #6f93c4;
    border-top: 1px solid #4e6b94;
    border-bottom: 1px solid #4e6b94;
}

.bar-on {
    background: #2b9f98;
}

.s1 { left: 35px; width: 235px; }
.s2 { left: 296px; width: 236px; }

.kf {
    position: absolute;
    top: 4.5px;
    width: 12px;
    height: 12px;
    margin-left: -6px;
    background: #a6d0ff;
    transform: rotate(45deg);
}

.kf.on {
    background: #2fe8e4;
}

.k0 { left: 8px; }
.k3 { left: 270px; }
.k6 { left: 532px; }
.k9 { left: 795px; }
.k12 { left: 1057px; }
.k-a { left: 35px; }
.k-b { left: 296px; }
.k-c { left: 558px; }
.k-d { left: 820px; }

.v-scroll {
    flex: 1;
    padding: 124px 3px 3px 4px;
}

.v-scroll span {
    display: block;
    height: 97px;
    background: #5b6a8a;
    border-radius: 7px;
}

.time-foot {
    flex: 1;
    display: flex;
    align-items: center;
    padding-left: 264px;
}

.zoom-btn {
    width: 12px;
    color: #5b6070;
    text-align: center;
    font-size: 15px;
}

.minus {
    height: 1px;
    background: #4e5362;
}

.zoom-track {
    width: 175px;
    height: 14px;
    margin-left: 15px;
    background: #232630;
    border-radius: 7px;
    position: relative;
}

.zoom-fill {
    display: block;
    width: 50px;
    height: 100%;
    background: #5b6785;
    border-radius: 7px 0 0 7px;
}

.zoom-thumb {
    position: absolute;
    left: 36px;
    top: -2px;
    width: 18px;
    height: 18px;
    background: #d8dde5;
    border-radius: 50%;
}

.plus {
    margin-left: 12px;
}

.h-scroll {
    width: 466px;
    height: 14px;
    margin-left: 20px;
    background: #5b6785;
    border-radius: 7px;
}

.playhead {
    position: absolute;
    left: 263px;
    top: 26px;
    width: 11px;
    height: 241px;
    z-index: 3;
}

.playhead svg {
    display: block;
}

.playhead::after {
    content: "";
    position: absolute;
    left: 5px;
    top: 15px;
    bottom: 0;
    width: 1px;
    background: #e4e6ea;
}
```
